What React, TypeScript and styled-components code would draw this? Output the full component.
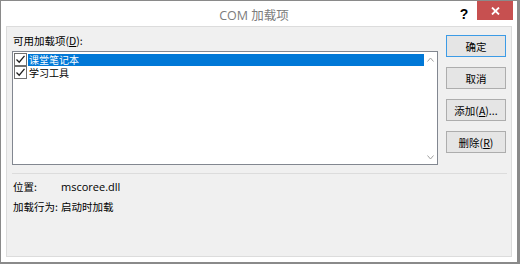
import React from "react";
import styled, { createGlobalStyle } from "styled-components";

const Global = createGlobalStyle`
  html, body { margin: 0; padding: 0; background: #ffffff; }
  body { font-family: "Noto Sans CJK SC", "Noto Sans", sans-serif; }
  * { box-sizing: border-box; }
`;

const Window = styled.div`
  width: 520px;
  height: 264px;
  background: #ffffff;
  border: 1px solid #8a8a8a;
  border-right-width: 3px;
  border-bottom-width: 2px;
  display: flex;
  flex-direction: column;
`;

const TitleBar = styled.div`
  height: 25px;
  position: relative;
  display: flex;
  align-items: center;
  justify-content: center;
`;

const Title = styled.div`
  font-family: "Open Sans", "Noto Sans CJK SC", sans-serif;
  font-size: 12.5px;
  color: #7c7c7c;
  margin-left: -10px;
  margin-top: 2px;
`;

const TitleButtons = styled.div`
  position: absolute;
  right: 4px;
  top: 0;
  display: flex;
  align-items: flex-start;
`;

const Help = styled.div`
  font-family: "Liberation Sans", Arial, sans-serif;
  font-weight: bold;
  font-size: 14px;
  color: #000;
  width: 26px;
  height: 19px;
  display: flex;
  align-items: center;
  justify-content: center;
  margin-top: 3px;
`;

const Close = styled.div`
  width: 36px;
  height: 19px;
  background: #c75050;
  display: flex;
  align-items: center;
  justify-content: center;
`;

const Content = styled.div`
  flex: 1;
  margin: 0 5px 5px 5px;
  background: #f0f0f0;
  border: 1px solid #dcdcdc;
  padding: 7px 5px 0 5px;
  display: flex;
  flex-direction: column;
  font-size: 10.5px;
  color: #000;
`;

const Top = styled.div`
  display: grid;
  grid-template-columns: 426px 60px;
  column-gap: 8px;
`;

const LeftCol = styled.div`
  display: flex;
  flex-direction: column;
`;

const Label = styled.div`
  height: 17px;
  line-height: 14px;
  padding-left: 1px;
`;

const U = styled.span`
  text-decoration: underline;
`;

const ListBox = styled.div`
  height: 114px;
  background: #ffffff;
  border: 1px solid #828790;
  display: flex;
`;

const Items = styled.div`
  flex: 1;
  padding: 1px 0 0 1px;
`;

const Row = styled.div`
  height: 13px;
  display: flex;
  align-items: center;
`;

const Check = styled.div`
  width: 13px;
  height: 13px;
  border: 1px solid #707070;
  background: #fff;
  display: flex;
  align-items: center;
  justify-content: center;
  margin-right: 1px;
`;

const ItemText = styled.div<{ $selected?: boolean }>`
  flex: 1;
  height: 12px;
  font-size: 10px;
  line-height: 12px;
  padding-left: 1px;
  background: ${(p) => (p.$selected ? "#0078d7" : "transparent")};
  color: ${(p) => (p.$selected ? "#ffffff" : "#000000")};
`;

const ScrollBar = styled.div`
  width: 13px;
  display: flex;
  flex-direction: column;
  justify-content: space-between;
  align-items: center;
  padding: 5px 0 4px 0;
`;

const Buttons = styled.div`
  display: flex;
  flex-direction: column;
  gap: 10px;
  padding-top: 1px;
`;

const Button = styled.div<{ $default?: boolean }>`
  height: 22px;
  border: 1px solid ${(p) => (p.$default ? "#3c9be6" : "#adadad")};
  background: #e5e5e5;
  display: flex;
  align-items: center;
  justify-content: center;
  font-size: 10.5px;
  color: #000;
`;

const Separator = styled.div`
  height: 1px;
  background: #dcdcdc;
  margin: 8px 0 0 0;
  width: 495px;
`;

const Info = styled.div`
  display: flex;
  flex-direction: column;
  padding-top: 2px;
`;

const InfoRow = styled.div`
  height: 20px;
  display: grid;
  grid-template-columns: 48px 1fr;
  align-items: center;
  padding-left: 1px;
`;

const Latin = styled.span`
  font-family: "Open Sans", "Noto Sans", sans-serif;
  font-size: 11px;
`;

const CheckMark = () => (
  <svg width="9" height="9" viewBox="0 0 9 9">
    <path d="M0.5 4.5 L3.2 7.2 L8.5 0.8" fill="none" stroke="#202020" strokeWidth="1.3" />
  </svg>
);

const Chevron = ({ up }: { up?: boolean }) => (
  <svg width="7" height="5" viewBox="0 0 7 5">
    <path
      d={up ? "M0.5 4.5 L3.5 1 L6.5 4.5" : "M0.5 0.5 L3.5 4 L6.5 0.5"}
      fill="none"
      stroke="#a0a0a0"
      strokeWidth="1"
    />
  </svg>
);

export default function App() {
  return (
    <>
      <Global />
      <Window>
        <TitleBar>
          <Title>COM 加载项</Title>
          <TitleButtons>
            <Help>?</Help>
            <Close>
              <svg width="9" height="8" viewBox="0 0 9 8">
                <path d="M1 0.5 L8 7.5 M8 0.5 L1 7.5" stroke="#ffffff" strokeWidth="1.8" />
              </svg>
            </Close>
          </TitleButtons>
        </TitleBar>
        <Content>
          <Top>
            <LeftCol>
              <Label>
                可用加载项(<U>D</U>):
              </Label>
              <ListBox>
                <Items>
                  <Row>
                    <Check>
                      <CheckMark />
                    </Check>
                    <ItemText $selected>课堂笔记本</ItemText>
                  </Row>
                  <Row>
                    <Check>
                      <CheckMark />
                    </Check>
                    <ItemText>学习工具</ItemText>
                  </Row>
                </Items>
                <ScrollBar>
                  <Chevron up />
                  <Chevron />
                </ScrollBar>
              </ListBox>
            </LeftCol>
            <Buttons>
              <Button $default>确定</Button>
              <Button>取消</Button>
              <Button>
                添加(<U>A</U>)...
              </Button>
              <Button>
                删除(<U>R</U>)
              </Button>
            </Buttons>
          </Top>
          <Separator />
          <Info>
            <InfoRow>
              <span>位置:</span>
              <Latin>mscoree.dll</Latin>
            </InfoRow>
            <InfoRow>
              <span>加载行为:</span>
              <span>启动时加载</span>
            </InfoRow>
          </Info>
        </Content>
      </Window>
    </>
  );
}
